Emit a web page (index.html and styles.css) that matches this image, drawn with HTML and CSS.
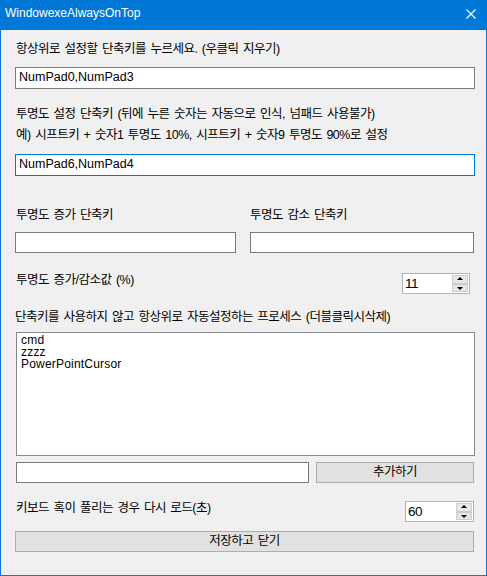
FILE: index.html
```html
<!DOCTYPE html>
<html lang="ko">
<head>
<meta charset="utf-8">
<title>WindowexeAlwaysOnTop</title>
<link rel="stylesheet" href="styles.css">
</head>
<body>
<div class="window">
  <div class="titlebar">
    <span class="title">WindowexeAlwaysOnTop</span>
    <svg class="close" width="10" height="10" viewBox="0 0 10 10"><path d="M0.5 0.5 L9.5 9.5 M9.5 0.5 L0.5 9.5" stroke="#fff" stroke-width="1.1" fill="none"/></svg>
  </div>
  <div class="content">
    <div class="label l1">항상위로 설정할 단축키를 누르세요. (우클릭 지우기)</div>
    <div class="input in1">NumPad0,NumPad3</div>
    <div class="label two">투명도 설정 단축키 (뒤에 누른 숫자는 자동으로 인식, 넘패드 사용불가)<br>예) 시프트키 + 숫자1 투명도 10%, 시프트키 + 숫자9 투명도 90%로 설정</div>
    <div class="input in2 focus">NumPad6,NumPad4</div>
    <div class="pair-labels">
      <div class="label">투명도 증가 단축키</div>
      <div class="label right">투명도 감소 단축키</div>
    </div>
    <div class="pair-inputs">
      <div class="input small"></div>
      <div class="input small wide"></div>
    </div>
    <div class="spin-row r1">
      <div class="label">투명도 증가/감소값 (%)</div>
      <div class="spin s1"><span class="val">11</span><span class="arrows"><span class="up"></span><span class="down"></span></span></div>
    </div>
    <div class="label l4">단축키를 사용하지 않고 항상위로 자동설정하는 프로세스 (더블클릭시삭제)</div>
    <div class="listbox">
      <div class="item">cmd</div>
      <div class="item">zzzz</div>
      <div class="item">PowerPointCursor</div>
    </div>
    <div class="add-row">
      <div class="input addin"></div>
      <div class="btn addbtn">추가하기</div>
    </div>
    <div class="spin-row r2">
      <div class="label">키보드 혹이 풀리는 경우 다시 로드(초)</div>
      <div class="spin s2"><span class="val">60</span><span class="arrows"><span class="up"></span><span class="down"></span></span></div>
    </div>
    <div class="btn save">저장하고 닫기</div>
  </div>
</div>
</body>
</html>
```

FILE: styles.css
```css
html, body {
  margin: 0;
  padding: 0;
  background: #f0f0f0;
}
.window {
  width: 487px;
  height: 576px;
  box-sizing: border-box;
  border: 1px solid #0b78d6;
  border-top: none;
  background: #f0f0f0;
  font-family: "Liberation Sans", "Noto Sans CJK KR", sans-serif;
  font-size: 12.5px;
  letter-spacing: -0.5px;
  word-spacing: 1.5px;
  color: #000;
}
.titlebar {
  height: 30px;
  background: #0078d7;
  margin: 0 -1px;
  display: flex;
  align-items: flex-start;
  justify-content: space-between;
  color: #fff;
}
.title {
  font-family: "Liberation Sans", sans-serif;
  font-size: 12px;
  letter-spacing: 0;
  word-spacing: 0;
  line-height: 14px;
  padding: 6px 0 0 5px;
}
.close {
  margin: 9px 11px 0 0;
}
.content {
  padding: 0 12px 0 14px;
}
.label {
  line-height: 16px;
  height: 16px;
  white-space: nowrap;
}
.l1 {
  margin-top: 11px;
  padding-left: 1px;
}
.input {
  box-sizing: border-box;
  height: 22px;
  background: #fff;
  border: 1px solid #7a7a7a;
  font-size: 12.5px;
  letter-spacing: 0;
  word-spacing: 0;
  line-height: 19px;
  padding-left: 3px;
  white-space: nowrap;
}
.in1 {
  margin-top: 10px;
  width: 460px;
}
.two {
  height: auto;
  line-height: 21px;
  margin-top: 15px;
  padding-left: 1px;
}
.in2 {
  margin-top: 8px;
  width: 460px;
}
.focus {
  border-color: #0078d7;
}
.pair-labels {
  display: flex;
  margin-top: 31px;
  padding-left: 1px;
}
.pair-labels .label:first-child {
  width: 234px;
}
.pair-inputs {
  display: flex;
  gap: 14px;
  margin-top: 9px;
}
.input.small {
  height: 21px;
  width: 221px;
}
.input.small.wide {
  width: 225px;
}
.spin-row {
  display: flex;
  justify-content: space-between;
  align-items: flex-start;
  padding-left: 1px;
}
.r1 {
  margin-top: 20px;
}
.r1 .label {
  margin-top: -1px;
}
.spin {
  box-sizing: border-box;
  height: 21px;
  background: #fff;
  border: 1px solid #b4b4b4;
  display: flex;
  justify-content: space-between;
  font-size: 13.5px;
  letter-spacing: -0.5px;
  word-spacing: 0;
  line-height: 19px;
}
.s1 {
  width: 68px;
  margin-right: 4px;
}
.val {
  padding-left: 2px;
}
.arrows {
  width: 16px;
  display: flex;
  flex-direction: column;
  padding: 1px 1px 1px 0;
}
.arrows .up, .arrows .down {
  flex: 1;
  background: #e6e6e6;
  border: 1px solid #cdcdcd;
  position: relative;
}
.arrows .up::after, .arrows .down::after {
  content: "";
  position: absolute;
  left: 50%;
  top: 50%;
  margin-left: -3px;
  width: 0;
  height: 0;
  border-left: 3px solid transparent;
  border-right: 3px solid transparent;
}
.arrows .up::after {
  border-bottom: 3px solid #000;
  margin-top: -2px;
}
.arrows .down::after {
  border-top: 3px solid #000;
  margin-top: -1px;
}
.l4 {
  margin-top: 15px;
}
.listbox {
  box-sizing: border-box;
  margin-top: 7px;
  margin-left: 1px;
  width: 459px;
  height: 124px;
  background: #fff;
  border: 1px solid #828790;
  padding: 1px 0 0 4px;
  font-size: 12px;
  letter-spacing: 0.2px;
  word-spacing: 0;
}
.item {
  height: 12px;
  line-height: 12px;
}
.add-row {
  display: flex;
  margin-top: 6px;
  margin-left: 1px;
  gap: 7px;
}
.input.addin {
  height: 21px;
  width: 293px;
}
.btn {
  box-sizing: border-box;
  height: 21px;
  background: #e1e1e1;
  border: 1px solid #adadad;
  text-align: center;
  line-height: 19px;
}
.addbtn {
  width: 158px;
}
.r2 {
  margin-top: 18px;
}
.r2 .label {
  margin-top: -1px;
}
.s2 {
  width: 69px;
}
.save {
  margin-top: 9px;
  width: 459px;
}
```
